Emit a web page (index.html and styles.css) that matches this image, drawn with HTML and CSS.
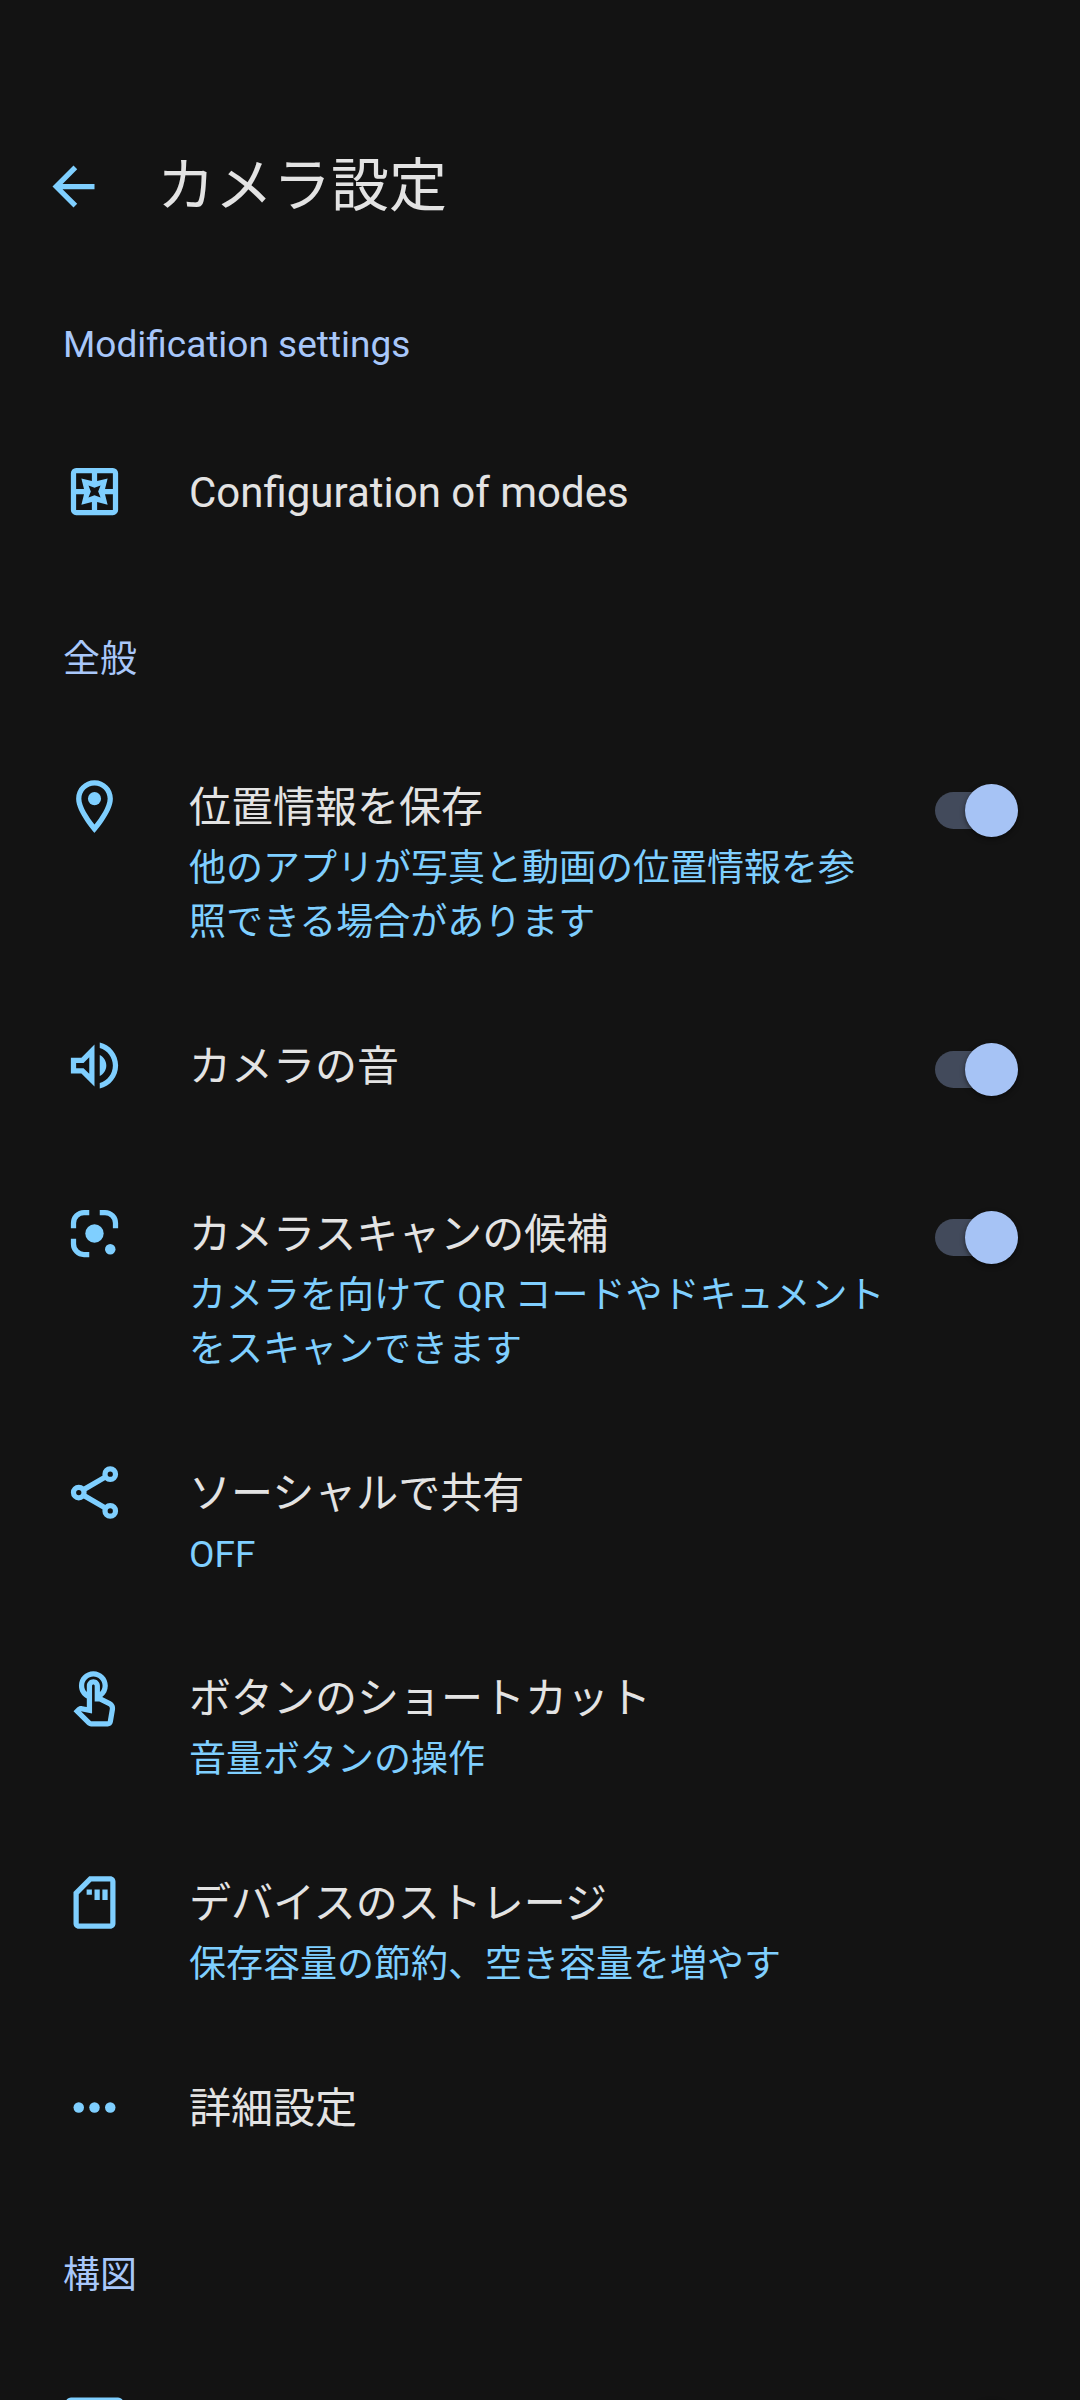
FILE: index.html
```html
<!DOCTYPE html>
<html lang="ja">
<head>
<meta charset="utf-8">
<meta name="viewport" content="width=device-width, initial-scale=1">
<title>カメラ設定</title>
<link rel="stylesheet" href="styles.css">
</head>
<body>
<div class="screen">
  <header class="app-bar">
    <button class="back" type="button" aria-label="戻る">
      <svg class="icon" viewBox="0 0 24 24"><path d="M20 11H7.83l5.59-5.59L12 4l-8 8 8 8 1.41-1.41L7.83 13H20v-2z"/></svg>
    </button>
    <h1 class="app-title">カメラ設定</h1>
  </header>

  <main class="settings">
    <section>
      <h2 class="section-title">Modification settings</h2>
      <button class="row" type="button">
        <svg class="icon row-icon" viewBox="0 0 24 24"><path fill-rule="evenodd" d="M5 3h14a2 2 0 0 1 2 2v14a2 2 0 0 1-2 2H5a2 2 0 0 1-2-2V5a2 2 0 0 1 2-2zM5 5v6h3L7 7l4 1V5zM19 5h-6v3l4-1-1 4h3zM5 19h6v-3l-4 1 1-4H5zM19 19v-6h-3l1 4-4-1v3zM9.7 9.7l.9 2.3-.9 2.3 2.3-.9 2.3.9-.9-2.3.9-2.3-2.3.9z"/></svg>
        <span class="row-text"><span class="row-title">Configuration of modes</span></span>
      </button>
    </section>

    <section>
      <h2 class="section-title">全般</h2>
      <label class="row has-summary">
        <svg class="icon row-icon" viewBox="0 0 24 24"><path d="M12 2C8.13 2 5 5.13 5 9c0 5.25 7 13 7 13s7-7.75 7-13c0-3.87-3.13-7-7-7zM7 9c0-2.76 2.24-5 5-5s5 2.24 5 5c0 2.88-2.88 7.19-5 9.88C9.92 16.21 7 11.85 7 9z"/><circle cx="12" cy="9" r="2.5"/></svg>
        <span class="row-text">
          <span class="row-title">位置情報を保存</span>
          <span class="row-summary">他のアプリが写真と動画の位置情報を参照できる場合があります</span>
        </span>
        <input class="switch" type="checkbox" role="switch" checked>
      </label>
      <label class="row">
        <svg class="icon row-icon" viewBox="0 0 24 24"><path d="M3 9v6h4l5 5V4L7 9H3zm7-.17v6.34L7.83 13H5v-2h2.83L10 8.83zM16.5 12c0-1.77-1.02-3.29-2.5-4.03v8.05c1.48-.73 2.5-2.25 2.5-4.02zM14 3.23v2.06c2.89.86 5 3.54 5 6.71s-2.11 5.85-5 6.71v2.06c4.01-.91 7-4.49 7-8.77s-2.99-7.86-7-8.77z"/></svg>
        <span class="row-text"><span class="row-title">カメラの音</span></span>
        <input class="switch" type="checkbox" role="switch" checked>
      </label>
      <label class="row has-summary">
        <svg class="icon row-icon" viewBox="0 0 24 24"><path class="line" d="M4 10V8a4 4 0 0 1 4-4h2M14 4h2a4 4 0 0 1 4 4v2M4 14v2a4 4 0 0 0 4 4h2"/><circle cx="12" cy="12" r="3.5"/><circle cx="18" cy="18" r="2"/></svg>
        <span class="row-text">
          <span class="row-title">カメラスキャンの候補</span>
          <span class="row-summary">カメラを向けて QR コードやドキュメントをスキャンできます</span>
        </span>
        <input class="switch" type="checkbox" role="switch" checked>
      </label>
      <button class="row has-summary" type="button">
        <svg class="icon row-icon" viewBox="0 0 24 24"><path class="line" d="M7.7 11l8.6-5M7.7 13l8.6 5"/><circle class="line" cx="18" cy="5" r="2"/><circle class="line" cx="6" cy="12" r="2"/><circle class="line" cx="18" cy="19" r="2"/></svg>
        <span class="row-text">
          <span class="row-title">ソーシャルで共有</span>
          <span class="row-summary">OFF</span>
        </span>
      </button>
      <button class="row has-summary" type="button">
        <svg class="icon row-icon" viewBox="0 -1 24 24"><path d="M18.19 12.44l-3.24-1.62c1.29-1 2.12-2.56 2.12-4.32 0-3.03-2.47-5.5-5.5-5.5s-5.5 2.47-5.5 5.5c0 2.13 1.22 3.98 3 4.89v3.26c-2.15-.46-2.02-.44-2.26-.44-.53 0-1.03.21-1.41.59L4 16.22l5.09 5.09c.43.44 1.03.69 1.65.69h6.3c.98 0 1.81-.7 1.97-1.67l.8-4.71c.22-1.3-.43-2.58-1.62-3.18zm-.35 2.85l-.8 4.71h-6.3c-.09 0-.17-.04-.24-.1l-3.68-3.68 4.25.89V6.5c0-.28.22-.5.5-.5s.5.22.5.5v6h1.76l3.46 1.73c.4.2.62.63.55 1.06zM8.07 6.5c0-1.93 1.57-3.5 3.5-3.5s3.5 1.57 3.5 3.5c0 .95-.38 1.81-1 2.44V6.5c0-1.38-1.12-2.5-2.5-2.5s-2.5 1.12-2.5 2.5v2.44c-.62-.63-1-1.49-1-2.44z"/></svg>
        <span class="row-text">
          <span class="row-title">ボタンのショートカット</span>
          <span class="row-summary">音量ボタンの操作</span>
        </span>
      </button>
      <button class="row has-summary" type="button">
        <svg class="icon row-icon" viewBox="0 0 24 24"><path d="M18 2h-8L4 8v12c0 1.1.9 2 2 2h12c1.1 0 2-.9 2-2V4c0-1.1-.9-2-2-2zm0 18H6V8.83L10.83 4H18v16zM9 7h2v2H9zM12 7h2v4h-2zM15 7h2v4h-2z"/></svg>
        <span class="row-text">
          <span class="row-title">デバイスのストレージ</span>
          <span class="row-summary">保存容量の節約、空き容量を増やす</span>
        </span>
      </button>
      <button class="row" type="button">
        <svg class="icon row-icon" viewBox="0 0 24 24"><circle cx="6" cy="12" r="2"/><circle cx="12" cy="12" r="2"/><circle cx="18" cy="12" r="2"/></svg>
        <span class="row-text"><span class="row-title">詳細設定</span></span>
      </button>
    </section>

    <section>
      <h2 class="section-title">構図</h2>
      <label class="row">
        <svg class="icon row-icon" viewBox="0 0 24 24"><rect class="line" x="2" y="3.5" width="20" height="17" rx="1"/></svg>
        <span class="row-text"></span>
        <input class="switch" type="checkbox" role="switch" aria-label="構図" checked>
      </label>
    </section>
  </main>
</div>
</body>
</html>
```
FILE: styles.css
```css
:root {
  --bg: #131313;
  --text: #e3e3e3;
  --sky: #7fcfff;
  --accent: #a8c7fa;
  --thumb: #a6c3f5;
  --track: #424a5b;
}

* {
  box-sizing: border-box;
}

body {
  margin: 0;
  background: var(--bg);
  color: var(--text);
  font-family: Roboto, "Noto Sans CJK JP", sans-serif;
}

.screen {
  display: flex;
  flex-direction: column;
  height: 100vh;
}

.app-bar {
  display: flex;
  align-items: center;
  gap: 52px;
  flex: none;
  padding: 142px 42px 32px;
}

.back {
  display: flex;
  padding: 0;
  border: 0;
  background: none;
}

.app-title {
  margin: 0;
  font-size: 58px;
  font-weight: 400;
  line-height: 88px;
}

.icon {
  flex: none;
  width: 63px;
  height: 63px;
  fill: var(--sky);
}

.icon .line {
  fill: none;
  stroke: var(--sky);
  stroke-width: 2;
}

.settings {
  flex: 1;
  min-height: 0;
  overflow-y: auto;
  scrollbar-width: none;
}

.section-title {
  margin: 0;
  padding: 56px 63px 37px;
  color: var(--accent);
  font-size: 37px;
  font-weight: 400;
  line-height: 54px;
}

.row {
  display: flex;
  align-items: flex-start;
  width: 100%;
  padding: 51px 62px 54px 63px;
  border: 0;
  background: none;
  color: inherit;
  font: inherit;
  text-align: left;
}

.row.has-summary {
  padding-bottom: 33px;
}

.row-icon {
  margin-right: 63px;
}

.row-text {
  display: flex;
  flex: 1;
  flex-direction: column;
  gap: 4px;
  min-width: 0;
  padding-top: 3px;
}

.row-title {
  font-size: 42px;
  line-height: 60px;
}

.row-summary {
  color: var(--sky);
  font-size: 37px;
  line-height: 54px;
}

.switch {
  display: flex;
  flex: none;
  align-items: center;
  justify-content: flex-end;
  width: 83px;
  height: 37px;
  margin: 17px 0 0 44px;
  border-radius: 19px;
  background: var(--track);
  appearance: none;
}

.switch::before {
  content: "";
  flex: none;
  width: 53px;
  height: 53px;
  border-radius: 50%;
  background: var(--thumb);
  box-shadow: 0 2px 5px rgba(0, 0, 0, 0.5);
}

.switch:not(:checked) {
  justify-content: flex-start;
}
```
